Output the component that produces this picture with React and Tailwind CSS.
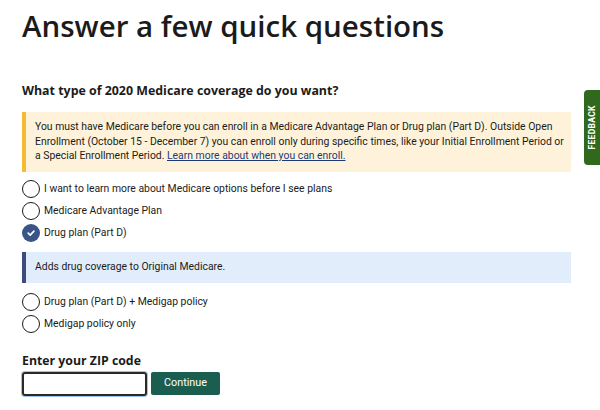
import React from "react";

function Radio({ checked, label }) {
  return (
    <div className="flex items-center h-[22px]">
      {checked ? (
        <span className="w-[18px] h-[18px] rounded-full bg-[#3b5487] flex items-center justify-center">
          <svg width="10" height="10" viewBox="0 0 10 10" fill="none">
            <path d="M2.2 5.2 L4.2 7.1 L7.9 3.2" stroke="white" strokeWidth="1.7" strokeLinecap="round" strokeLinejoin="round" />
          </svg>
        </span>
      ) : (
        <span className="w-[18px] h-[18px] rounded-full border-[1.5px] border-[#1b1b1b] bg-white" />
      )}
      <span className="ml-[4px] text-[10.4px] text-[#1b1b1b]">{label}</span>
    </div>
  );
}

export default function App() {
  return (
    <div className="relative w-[600px] h-[410px] bg-white overflow-hidden" style={{ fontFamily: "Roboto, 'Noto Sans', sans-serif" }}>
      <div className="pl-[22px] pr-[29px] pt-[5px]">
        <h1 className="text-[29.5px] leading-[42px] font-semibold text-[#1b1b1b]" style={{ fontFamily: "'Open Sans', sans-serif" }}>
          Answer a few quick questions
        </h1>
        <h2 className="mt-[35px] text-[12.4px] leading-[18px] font-bold text-[#1b1b1b]" style={{ fontFamily: "'Open Sans', sans-serif" }}>
          What type of 2020 Medicare coverage do you want?
        </h2>
        <div className="mt-[12px] border-l-4 border-[#f5bb34] bg-[#fef3da] pl-[9px] pr-[2px] py-[8px] text-[10.4px] leading-[14.5px] text-[#1b1b1b]">
          You must have Medicare before you can enroll in a Medicare Advantage Plan or Drug plan (Part D). Outside Open Enrollment (October 15 - December 7) you can enroll only during specific times, like your Initial Enrollment Period or a Special Enrollment Period.{" "}
          <a className="underline text-[#1c3a7a]" href="#">Learn more about when you can enroll.</a>
        </div>
        <div className="mt-[6px] flex flex-col">
          <Radio label="I want to learn more about Medicare options before I see plans" />
          <Radio label="Medicare Advantage Plan" />
          <Radio checked label="Drug plan (Part D)" />
        </div>
        <div className="mt-[8px] border-l-4 border-[#3d4c7c] bg-[#e2edfc] pl-[9px] h-[31px] flex items-center text-[10.4px] text-[#1b1b1b]">
          Adds drug coverage to Original Medicare.
        </div>
        <div className="mt-[8px] flex flex-col">
          <Radio label="Drug plan (Part D) + Medigap policy" />
          <Radio label="Medigap policy only" />
        </div>
        <h3 className="mt-[17px] text-[12.3px] leading-[18px] font-bold text-[#1b1b1b]" style={{ fontFamily: "'Open Sans', sans-serif" }}>
          Enter your ZIP code
        </h3>
        <div className="mt-[2px] flex items-start gap-[4px]">
          <input className="w-[125px] h-[24px] border-2 border-[#2a2a2a] rounded-[3px] outline-none shadow-[0_0_0_1px_#9ec3f0]" />
          <button className="w-[69px] h-[23px] bg-[#1b5e50] text-white text-[10.8px] rounded-[2px]">Continue</button>
        </div>
      </div>
      <div className="absolute right-0 top-[90px] w-[16px] h-[75px] bg-[#30691e] rounded-l-[4px] flex items-center justify-center">
        <span className="text-white text-[8.5px] font-bold tracking-[0.3px] whitespace-nowrap -rotate-90">FEEDBACK</span>
      </div>
    </div>
  );
}
